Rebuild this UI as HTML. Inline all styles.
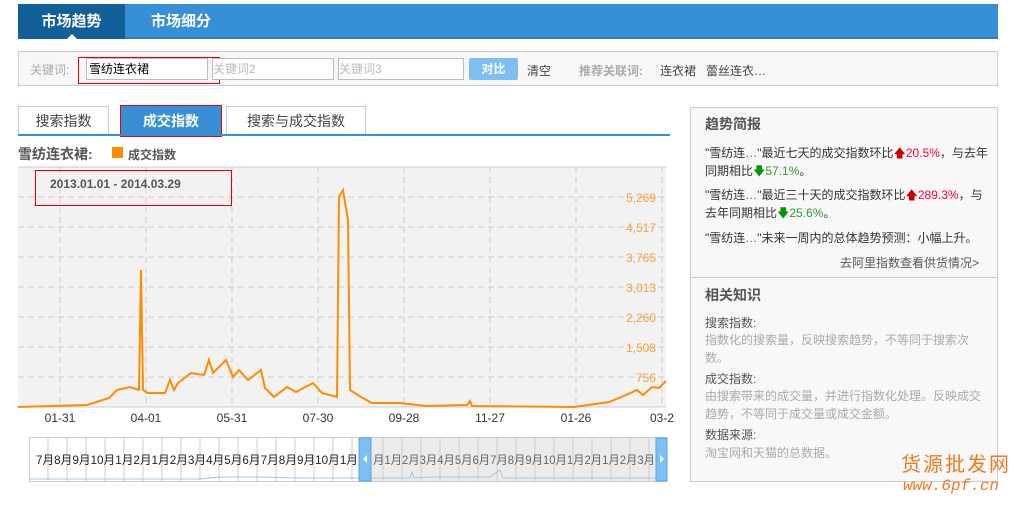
<!DOCTYPE html>
<html><head><meta charset="utf-8"><style>
*{margin:0;padding:0;box-sizing:border-box}
body{width:1014px;height:505px;background:#fff;font-family:"Liberation Sans","Noto Sans CJK SC",sans-serif;font-size:12px;color:#333;position:relative;overflow:hidden}
.a{position:absolute}
</style></head><body>
<div class="a" style="left:18px;top:4px;width:980px;height:35px;background:#3790d6;border-bottom:2px solid #2f7fc0"></div>
<div class="a" style="left:18px;top:4px;width:107px;height:35px;background:#12609a;color:#fff;font-size:15px;font-weight:bold;line-height:35px;text-align:center">市场趋势</div>
<div class="a" style="left:67px;top:34px;width:0;height:0;border-left:5px solid transparent;border-right:5px solid transparent;border-bottom:5px solid #fff"></div>
<div class="a" style="left:125px;top:4px;width:112px;height:35px;color:#fff;font-size:15px;font-weight:bold;line-height:35px;text-align:center">市场细分</div>

<div class="a" style="left:18px;top:51px;width:980px;height:35px;background:#f7f7f7;border:1px solid #ccc"></div>
<div class="a" style="left:30px;top:61px;color:#aaa">关键词:</div>
<div class="a" style="left:86px;top:58px;width:122px;height:22px;background:#fff;border:1px solid #bbb;padding-left:2px;line-height:20px;color:#000">雪纺连衣裙</div>
<div class="a" style="left:78px;top:57px;width:142px;height:27px;border:1px solid #e00"></div>
<div class="a" style="left:212px;top:58px;width:122px;height:22px;background:#fff;border:1px solid #bbb;line-height:20px;color:#bbb">关键词2</div>
<div class="a" style="left:338px;top:58px;width:126px;height:22px;background:#fff;border:1px solid #bbb;line-height:20px;color:#bbb">关键词3</div>
<div class="a" style="left:469px;top:58px;width:49px;height:22px;background:#7dbff2;border-radius:2px;color:#fff;font-weight:bold;text-align:center;line-height:22px">对比</div>
<div class="a" style="left:527px;top:62px;color:#444">清空</div>
<div class="a" style="left:579px;top:62px;color:#aaa;font-weight:bold">推荐关联词:</div>
<div class="a" style="left:660px;top:62px;color:#444">连衣裙</div>
<div class="a" style="left:706px;top:62px;color:#444">蕾丝连衣…</div>

<div class="a" style="left:18px;top:106px;width:91px;height:28px;border:1px solid #b8d0e6;border-bottom:none;text-align:center;line-height:28px;font-size:14px;color:#444">搜索指数</div>
<div class="a" style="left:120px;top:105px;width:102px;height:32px;background:#3790d6;border:1px solid #e00;text-align:center;line-height:30px;font-size:14px;font-weight:bold;color:#fff">成交指数</div>
<div class="a" style="left:226px;top:106px;width:140px;height:28px;border:1px solid #b8d0e6;border-bottom:none;text-align:center;line-height:28px;font-size:14px;color:#444">搜索与成交指数</div>
<div class="a" style="left:18px;top:134px;width:652px;height:2px;background:#3790d6"></div>
<div class="a" style="left:18px;top:144px;font-size:14px;font-weight:bold;color:#555">雪纺连衣裙:</div>
<div class="a" style="left:112px;top:147px;width:11px;height:11px;background:#ff8c00"></div>
<div class="a" style="left:128px;top:146px;font-weight:bold;color:#555">成交指数</div>

<svg class="a" style="left:0;top:0" width="690" height="505">
<rect x="18" y="167" width="648" height="240" fill="#f2f2f2"/>
<line x1="18" y1="167" x2="666" y2="167" stroke="#ccc"/>
<g stroke="#ccc" stroke-dasharray="6,4">
<line x1="18" y1="197" x2="666" y2="197"/><line x1="18" y1="227" x2="666" y2="227"/><line x1="18" y1="257" x2="666" y2="257"/><line x1="18" y1="287" x2="666" y2="287"/><line x1="18" y1="317" x2="666" y2="317"/><line x1="18" y1="347" x2="666" y2="347"/><line x1="18" y1="377" x2="666" y2="377"/>
<line x1="60" y1="167" x2="60" y2="407"/><line x1="146" y1="167" x2="146" y2="407"/><line x1="232" y1="167" x2="232" y2="407"/><line x1="318" y1="167" x2="318" y2="407"/><line x1="404" y1="167" x2="404" y2="407"/><line x1="490" y1="167" x2="490" y2="407"/><line x1="576" y1="167" x2="576" y2="407"/><line x1="662" y1="167" x2="662" y2="407"/>
</g>
<line x1="18" y1="407" x2="666" y2="407" stroke="#ccc"/>
<g fill="#f5a040" font-size="12" text-anchor="end" font-family="Liberation Sans">
<text x="656" y="202">5,269</text><text x="656" y="232">4,517</text><text x="656" y="262">3,765</text><text x="656" y="292">3,013</text><text x="656" y="322">2,260</text><text x="656" y="352">1,508</text><text x="656" y="382">756</text>
</g>
<g fill="#333" font-size="12" text-anchor="middle" font-family="Liberation Sans">
<text x="60" y="422">01-31</text><text x="146" y="422">04-01</text><text x="232" y="422">05-31</text><text x="318" y="422">07-30</text><text x="404" y="422">09-28</text><text x="490" y="422">11-27</text><text x="576" y="422">01-26</text><text x="662" y="422">03-2</text>
</g>
<polyline fill="none" stroke="#ff8c00" stroke-width="2" points="18,407 87,405 109,398 117,390 130,387 139,390 141,270 143,390 148,393 165,393 170,380 174,390 178,383 191,373 204,375 209,360 213,373 226,360 233,377 239,370 248,380 261,370 265,388 274,397 287,387 296,392 313,383 322,393 337,397 339,197 343,190 348,220 350,390 361,397 372,403 400,403 426,406 467,405 470,401 472,406 574,407 609,402 626,395 637,390 643,395 652,387 659,388 666,381"/>
<rect x="35.5" y="170.5" width="196" height="35" fill="none" stroke="#e00"/>
<text x="50" y="188" fill="#555" font-size="12" font-weight="bold" font-family="Liberation Sans">2013.01.01 - 2014.03.29</text>
<rect x="29.5" y="437.5" width="637" height="44" fill="#fff" stroke="#ccc"/>
<rect x="371" y="438" width="285" height="43" fill="#ebebeb"/>
<g stroke="#ccc"><path d="M48 438v43M67 438v43M86 438v43M105 438v43M124 438v43M143 438v43M162 438v43M181 438v43M200 438v43M219 438v43M238 438v43M257 438v43M276 438v43M295 438v43M314 438v43M333 438v43M352 438v43M383 438v43M402 438v43M421 438v43M440 438v43M459 438v43M478 438v43M497 438v43M516 438v43M535 438v43M554 438v43M573 438v43M592 438v43M611 438v43M630 438v43M649 438v43"/></g>
<text x="36" y="464" font-size="12" fill="#222" font-family="Liberation Sans,Noto Sans CJK SC" textLength="322" lengthAdjust="spacingAndGlyphs">7月8月9月10月1月2月1月2月3月4月5月6月7月8月9月10月1月</text>
<text x="373" y="464" font-size="12" fill="#666" font-family="Liberation Sans,Noto Sans CJK SC" textLength="282" lengthAdjust="spacingAndGlyphs">月1月2月3月4月5月6月7月8月9月10月1月2月1月2月3月</text>
<polyline fill="none" stroke="#a8c4dc" points="30,479 200,479 220,477 260,477 300,478 410,478 412,472 414,478 430,477 490,477 500,470 503,478 660,478"/>
<rect x="359" y="438" width="12" height="43" fill="#7dbff2" stroke="#5aa0dd"/>
<rect x="656" y="438" width="11" height="43" fill="#7dbff2" stroke="#5aa0dd"/>
<path d="M367 455l-4 4 4 4z" fill="#fff"/><path d="M660 455l4 4-4 4z" fill="#fff"/>
</svg>

<div class="a" style="left:690px;top:107px;width:308px;height:375px;background:#f8f8f8;border:1px solid #ccc"></div>
<div class="a" style="left:691px;top:277px;width:306px;height:1px;background:#ccc"></div>
<div class="a" style="left:705px;top:114px;font-size:14px;font-weight:bold;color:#555">趋势简报</div>
<div class="a" style="left:705px;top:144px;width:286px;line-height:18px;color:#333">"雪纺连<span style="color:#36c">…</span>"最近七天的成交指数环比<span style="color:#c00">🡅</span><span style="color:#f03">20.5%</span>，与去年同期相比<span style="color:#090">🡇</span><span style="color:#393">57.1%</span>。</div>
<div class="a" style="left:705px;top:186px;width:280px;line-height:18px;color:#333">"雪纺连<span style="color:#36c">…</span>"最近三十天的成交指数环比<span style="color:#c00">🡅</span><span style="color:#f03">289.3%</span>，与去年同期相比<span style="color:#090">🡇</span><span style="color:#393">25.6%</span>。</div>
<div class="a" style="left:705px;top:229px;color:#333">"雪纺连<span style="color:#36c">…</span>"未来一周内的总体趋势预测：小幅上升。</div>
<div class="a" style="left:840px;top:254px;color:#555">去阿里指数查看供货情况&gt;</div>
<div class="a" style="left:705px;top:285px;font-size:14px;font-weight:bold;color:#555">相关知识</div>
<div class="a" style="left:705px;top:314px;width:280px;line-height:18px;color:#555">搜索指数:</div>
<div class="a" style="left:705px;top:331px;width:280px;line-height:18px;color:#aaa">指数化的搜索量，反映搜索趋势，不等同于搜索次数。</div>
<div class="a" style="left:705px;top:370px;width:280px;line-height:18px;color:#555">成交指数:</div>
<div class="a" style="left:705px;top:387px;width:280px;line-height:18px;color:#aaa">由搜索带来的成交量，并进行指数化处理。反映成交趋势，不等同于成交量或成交金额。</div>
<div class="a" style="left:705px;top:426px;line-height:18px;color:#555">数据来源:</div>
<div class="a" style="left:705px;top:444px;line-height:18px;color:#aaa">淘宝网和天猫的总数据。</div>
<div class="a" style="left:901px;top:448px;font-size:20px;color:#f07a20;letter-spacing:2px;white-space:nowrap;font-family:'Noto Sans CJK SC',sans-serif">货源批发网</div>
<div class="a" style="left:903px;top:477px;font-size:16px;color:#f07a20;font-style:italic;white-space:nowrap;font-family:'Liberation Mono',monospace">www.6pf.cn</div>
</body></html>
